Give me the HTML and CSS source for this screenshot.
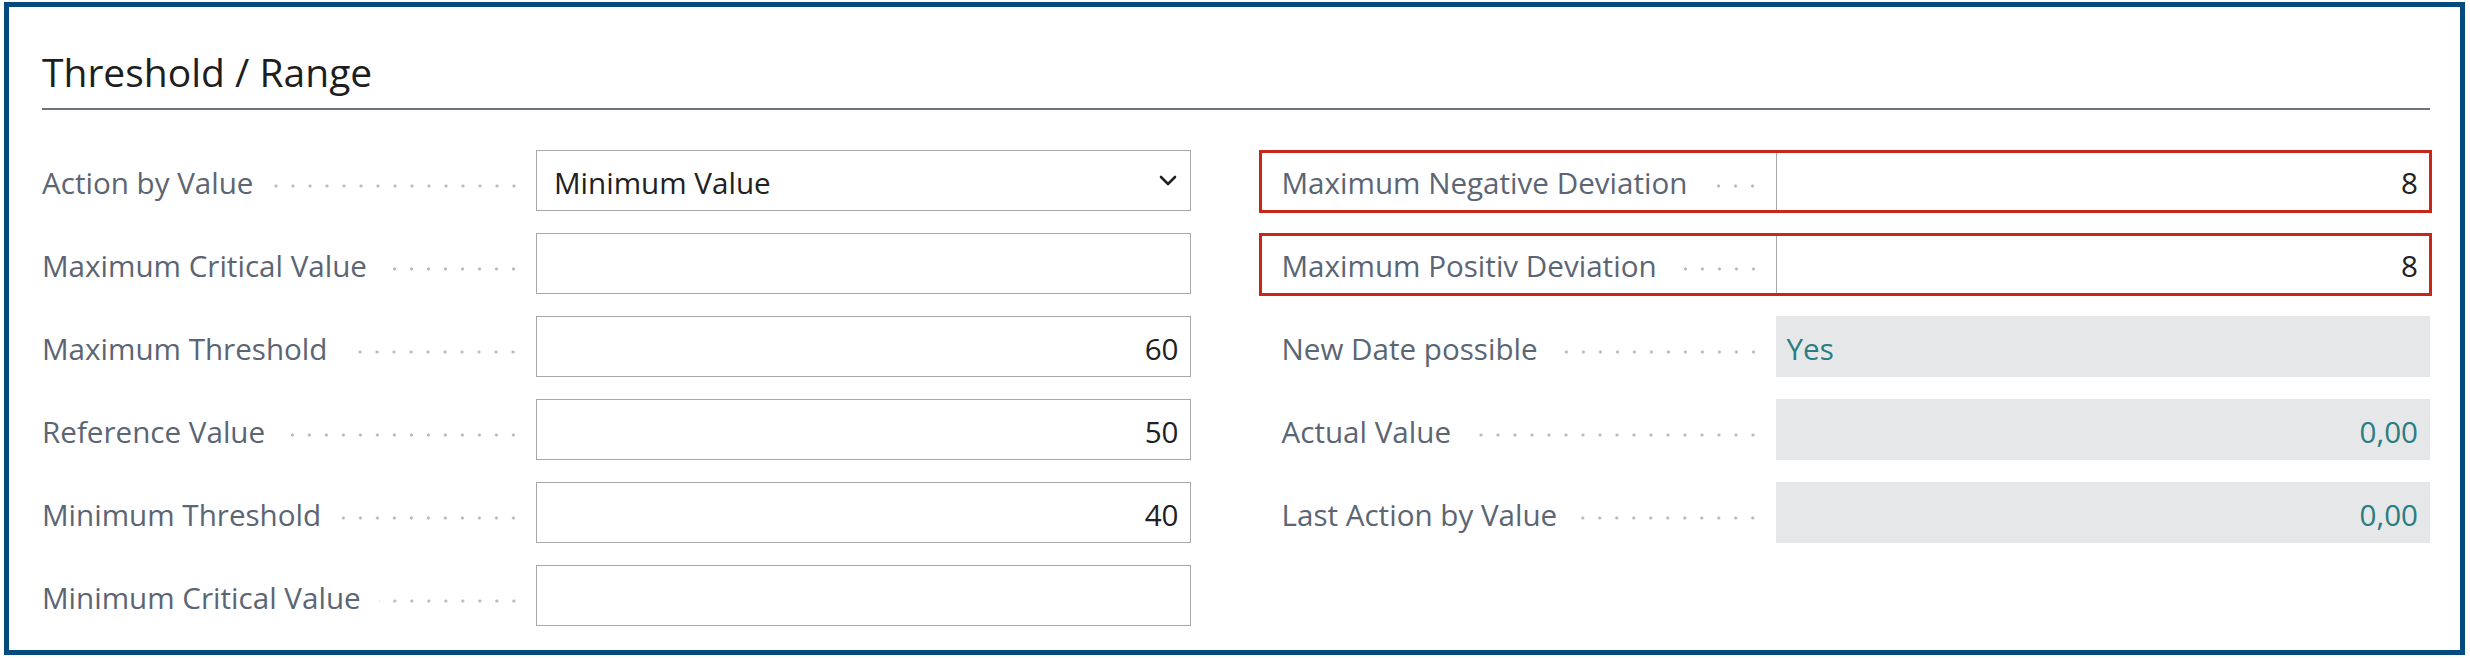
FILE: index.html
```html
<!DOCTYPE html>
<html lang="en">
<head>
  <meta charset="UTF-8" />
  <meta name="viewport" content="width=device-width, initial-scale=1.0"/>
  <title>Threshold / Range</title>
  <link rel="stylesheet" href="styles.css">
</head>
<body>
  <div class="frame">
    <h2 class="section-title">Threshold / Range</h2>

    <div class="columns">
      <!-- Left column -->
      <div class="column">
        <div class="row">
          <div class="caption"><span class="label">Action by Value</span><span class="leader"></span></div>
          <div class="field select">
            <span>Minimum Value</span>
            <svg class="chevron" width="18" height="11" viewBox="0 0 18 11"><path d="M2 2 L9 9 L16 2" /></svg>
          </div>
        </div>
        <div class="row">
          <div class="caption"><span class="label">Maximum Critical Value</span><span class="leader"></span></div>
          <div class="field num"></div>
        </div>
        <div class="row">
          <div class="caption"><span class="label">Maximum Threshold</span><span class="leader"></span></div>
          <div class="field num">60</div>
        </div>
        <div class="row">
          <div class="caption"><span class="label">Reference Value</span><span class="leader"></span></div>
          <div class="field num">50</div>
        </div>
        <div class="row">
          <div class="caption"><span class="label">Minimum Threshold</span><span class="leader"></span></div>
          <div class="field num">40</div>
        </div>
        <div class="row">
          <div class="caption"><span class="label">Minimum Critical Value</span><span class="leader"></span></div>
          <div class="field num"></div>
        </div>
      </div>

      <!-- Right column -->
      <div class="column">
        <div class="row marked">
          <div class="caption"><span class="label">Maximum Negative Deviation</span><span class="leader"></span></div>
          <div class="field num">8</div>
        </div>
        <div class="row marked">
          <div class="caption"><span class="label">Maximum Positiv Deviation</span><span class="leader"></span></div>
          <div class="field num">8</div>
        </div>
        <div class="row">
          <div class="caption"><span class="label">New Date possible</span><span class="leader"></span></div>
          <div class="field readonly">Yes</div>
        </div>
        <div class="row">
          <div class="caption"><span class="label">Actual Value</span><span class="leader"></span></div>
          <div class="field readonly num">0,00</div>
        </div>
        <div class="row">
          <div class="caption"><span class="label">Last Action by Value</span><span class="leader"></span></div>
          <div class="field readonly num">0,00</div>
        </div>
      </div>
    </div>
  </div>
</body>
</html>
```

FILE: styles.css
```css
body {
  margin: 0;
  padding: 2px 5px 4px 4px;
  font-family: "Open Sans", "Noto Sans", sans-serif;
  background-color: #ffffff;
}

.frame {
  height: 653px;
  box-sizing: border-box;
  border: 5px solid #034a7e;
  padding: 38px 30px 0 33px;
}

.section-title {
  margin: 0 0 40px;
  padding-bottom: 9px;
  border-bottom: 2px solid #6f747a;
  font-size: 39px;
  font-weight: 400;
  line-height: 54px;
  color: #1e1e1e;
}

.columns {
  display: grid;
  grid-template-columns: 1fr 1fr;
  column-gap: 91px;
}

.column {
  display: flex;
  flex-direction: column;
  gap: 22px;
}

.row {
  display: flex;
  align-items: center;
  height: 61px;
}

/* red highlight around a whole row */
.row.marked {
  position: relative;
  margin-left: -23px;
  padding-left: 23px;
}

.row.marked::after {
  content: "";
  position: absolute;
  top: 0;
  left: 0;
  right: -2px;
  bottom: -2px;
  border: 3px solid #c9261a;
  pointer-events: none;
}

.caption {
  flex: none;
  width: 494px;
  display: flex;
  align-items: center;
  padding-top: 4px;
}

.label {
  white-space: nowrap;
  font-size: 29.6px;
  color: #5b6573;
}

.leader {
  flex: 1;
  height: 4px;
  margin: 6px 14px 0 18px;
  background: radial-gradient(circle, #bcbcbc 1.3px, transparent 1.9px) right center / 17px 4px repeat-x;
}

.field {
  flex: 1;
  height: 61px;
  box-sizing: border-box;
  display: flex;
  align-items: center;
  padding: 4px 11px 0 17px;
  border: 1px solid #a8a8a8;
  background-color: #ffffff;
  font-size: 29.6px;
  color: #212121;
  white-space: nowrap;
}

.field.num {
  justify-content: flex-end;
}

.field.select {
  justify-content: space-between;
  padding-right: 13px;
}

.field.readonly {
  padding-left: 10px;
  border-color: #e6e7e9;
  background-color: #e6e7e9;
  color: #2a7d83;
}

.chevron {
  margin-top: -4px;
}

.chevron path {
  fill: none;
  stroke: #222222;
  stroke-width: 2.6;
  stroke-linecap: round;
  stroke-linejoin: round;
}
```
